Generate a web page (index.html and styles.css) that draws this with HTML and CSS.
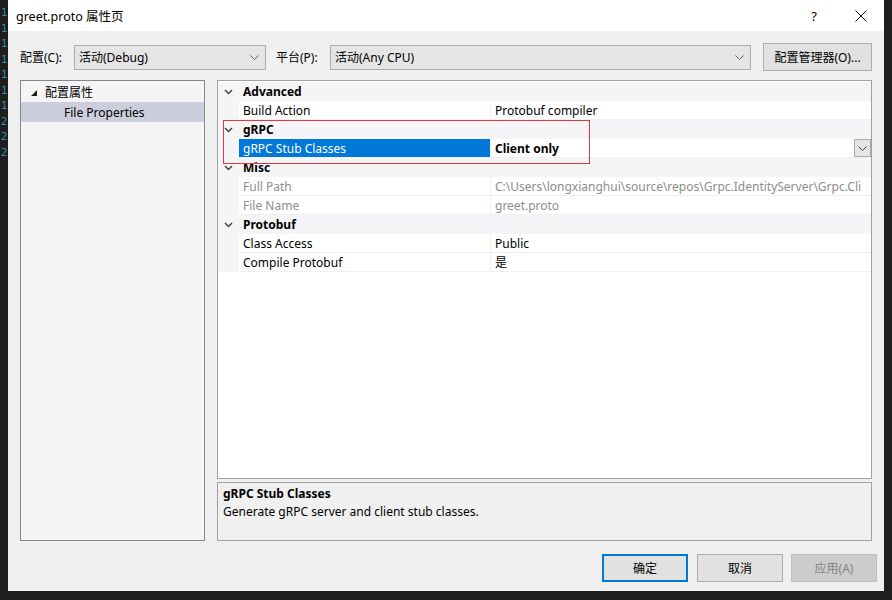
FILE: index.html
```html
<!DOCTYPE html>
<html>
<head>
<meta charset="utf-8">
<link rel="stylesheet" href="styles.css">
</head>
<body>
<div class="screen">
  <div class="gutter">
    <div>1</div><div>1</div><div>1</div><div>1</div><div>1</div><div>1</div><div>1</div><div>2</div><div>2</div><div>2</div>
  </div>
  <div class="dialog">
    <div class="titlebar">
      <span class="title">greet.proto 属性页</span>
      <span class="help">?</span>
      <svg class="close" width="12" height="12" viewBox="0 0 12 12"><path d="M0.5 0.5 L11.5 11.5 M11.5 0.5 L0.5 11.5" stroke="#111" stroke-width="1" fill="none"/></svg>
    </div>
    <div class="content">
      <div class="toolbar">
        <span class="label label-config">配置(C):</span>
        <div class="combo combo-config">
          <span class="combo-text">活动(Debug)</span>
          <svg class="combo-arrow" width="9" height="5" viewBox="0 0 9 5"><path d="M0.5 0.5 L4.5 4.5 L8.5 0.5" stroke="#606060" stroke-width="1" fill="none"/></svg>
        </div>
        <span class="label label-platform">平台(P):</span>
        <div class="combo combo-platform">
          <span class="combo-text">活动(Any CPU)</span>
          <svg class="combo-arrow" width="9" height="5" viewBox="0 0 9 5"><path d="M0.5 0.5 L4.5 4.5 L8.5 0.5" stroke="#606060" stroke-width="1" fill="none"/></svg>
        </div>
        <button class="btn btn-manager">配置管理器(O)...</button>
      </div>
      <div class="main">
        <div class="tree">
          <div class="tree-row">
            <svg class="tree-tri" width="6" height="6" viewBox="0 0 6 6"><polygon points="6,0 6,6 0,6" fill="#1e1e1e"/></svg>
            <span>配置属性</span>
          </div>
          <div class="tree-row tree-selected"><span class="tree-child">File Properties</span></div>
        </div>
        <div class="right">
          <div class="grid">
            <div class="row cat">
              <svg class="chev" width="9" height="6" viewBox="0 0 9 6"><path d="M1 1 L4.5 4.5 L8 1" stroke="#444" stroke-width="1.5" fill="none"/></svg>
              <span class="cat-name">Advanced</span>
            </div>
            <div class="row prop">
              <span class="pad"></span><span class="name">Build Action</span><span class="value">Protobuf compiler</span>
            </div>
            <div class="row cat">
              <svg class="chev" width="9" height="6" viewBox="0 0 9 6"><path d="M1 1 L4.5 4.5 L8 1" stroke="#444" stroke-width="1.5" fill="none"/></svg>
              <span class="cat-name">gRPC</span>
            </div>
            <div class="row prop selected">
              <span class="pad"></span><span class="name">gRPC Stub Classes</span>
              <span class="value bold"><span class="value-text">Client only</span>
                <span class="drop"><svg width="9" height="5" viewBox="0 0 9 5"><path d="M0.5 0.5 L4.5 4.5 L8.5 0.5" stroke="#404040" stroke-width="1" fill="none"/></svg></span>
              </span>
            </div>
            <div class="row cat">
              <svg class="chev" width="9" height="6" viewBox="0 0 9 6"><path d="M1 1 L4.5 4.5 L8 1" stroke="#444" stroke-width="1.5" fill="none"/></svg>
              <span class="cat-name">Misc</span>
            </div>
            <div class="row prop muted">
              <span class="pad"></span><span class="name">Full Path</span><span class="value">C:\Users\longxianghui\source\repos\Grpc.IdentityServer\Grpc.Cli</span>
            </div>
            <div class="row prop muted">
              <span class="pad"></span><span class="name">File Name</span><span class="value">greet.proto</span>
            </div>
            <div class="row cat">
              <svg class="chev" width="9" height="6" viewBox="0 0 9 6"><path d="M1 1 L4.5 4.5 L8 1" stroke="#444" stroke-width="1.5" fill="none"/></svg>
              <span class="cat-name">Protobuf</span>
            </div>
            <div class="row prop">
              <span class="pad"></span><span class="name">Class Access</span><span class="value">Public</span>
            </div>
            <div class="row prop">
              <span class="pad"></span><span class="name">Compile Protobuf</span><span class="value">是</span>
            </div>
            <div class="highlight"></div>
          </div>
          <div class="desc">
            <div class="desc-title">gRPC Stub Classes</div>
            <div class="desc-text">Generate gRPC server and client stub classes.</div>
          </div>
        </div>
      </div>
      <div class="buttons">
        <button class="btn btn-ok">确定</button>
        <button class="btn btn-cancel">取消</button>
        <button class="btn btn-apply">应用(A)</button>
      </div>
    </div>
  </div>
</div>
</body>
</html>
```
FILE: styles.css
```css
* { box-sizing: border-box; }
html, body {
  margin: 0;
  padding: 0;
  background: #1e1e1e;
  width: 892px;
  height: 600px;
  overflow: hidden;
}
body {
  font-family: "Noto Sans", "Noto Sans CJK SC", sans-serif;
  font-size: 12px;
  color: #000;
}
.screen {
  display: flex;
  width: 892px;
  height: 600px;
}
.gutter {
  width: 8px;
  padding-top: 5px;
  padding-left: 1px;
  font-family: "DejaVu Sans Mono", monospace;
  font-size: 10.5px;
  line-height: 15.5px;
  color: #2b91af;
  flex: none;
}
.dialog {
  width: 876px;
  height: 591px;
  background: #f0f0f0;
  display: flex;
  flex-direction: column;
  flex: none;
  min-width: 0;
}
.titlebar {
  height: 31px;
  background: #fff;
  display: flex;
  align-items: center;
  padding-left: 8px;
  flex: none;
}
.title {
  font-size: 12.5px;
  flex: 1;
  padding-bottom: 1px;
}
.help {
  font-size: 13px;
  margin-right: 38px;
}
.close {
  margin-right: 17px;
}
.content {
  flex: 1;
  display: flex;
  flex-direction: column;
  padding: 12px 12px 9px 12px;
  min-width: 0;
}
.toolbar {
  height: 28px;
  display: flex;
  align-items: center;
  flex: none;
}
.label {
  flex: none;
}
.label-config { width: 54px; }
.label-platform { width: 54px; margin-left: 10px; }
.combo {
  height: 25px;
  background: #e5e5e5;
  border: 1px solid #adadad;
  display: flex;
  align-items: center;
  padding-left: 4px;
  padding-right: 6px;
  flex: none;
}
.combo-text { flex: 1; }
.combo-config { width: 192px; }
.combo-platform { width: 421px; }
.btn {
  font-family: inherit;
  font-size: 12px;
  background: #e1e1e1;
  border: 1px solid #adadad;
  color: #000;
  padding: 0;
  margin: 0;
  height: 28px;
}
.btn-manager {
  width: 110px;
  margin-left: 12px;
}
.main {
  margin-top: 9px;
  height: 461px;
  display: flex;
  flex: none;
  min-width: 0;
}
.tree {
  width: 185px;
  background: #f5f5f5;
  border: 1px solid #828790;
  padding-top: 1px;
  flex: none;
}
.tree-row {
  height: 20px;
  display: flex;
  align-items: center;
}
.tree-tri {
  margin-left: 10px;
  margin-right: 8px;
  margin-top: 1px;
}
.tree-selected {
  background: #cccedb;
}
.tree-child { padding-left: 43px; }
.right {
  flex: 1;
  min-width: 0;
  margin-left: 12px;
  display: flex;
  flex-direction: column;
}
.grid {
  flex: 1;
  background: #fff;
  border: 1px solid #a0a0a0;
  padding-top: 1px;
  position: relative;
  overflow: hidden;
}
.row {
  height: 19px;
  display: flex;
  align-items: stretch;
  white-space: nowrap;
}
.cat {
  background: #f5f5f7;
  align-items: center;
}
.chev { margin-left: 6px; margin-right: 10px; }
.cat-name { font-weight: bold; }
.pad {
  width: 21px;
  background: #f5f5f7;
  flex: none;
}
.name, .value {
  border-bottom: 1px solid #f0f0f0;
  display: flex;
  align-items: center;
  overflow: hidden;
}
.name {
  width: 252px;
  padding-left: 4px;
  border-right: 1px solid #f0f0f0;
  flex: none;
}
.value {
  flex: 1;
  min-width: 0;
  padding-left: 4px;
}
.muted .name, .muted .value { color: #8d8d8d; }
.selected .name {
  background: #0078d7;
  color: #fff;
}
.bold { font-weight: bold; }
.value-text { flex: 1; }
.drop {
  width: 17px;
  height: 18px;
  background: #e5e5e5;
  border: 1px solid #adadad;
  display: flex;
  align-items: center;
  justify-content: center;
  flex: none;
}
.highlight {
  position: absolute;
  left: 5px;
  top: 39px;
  width: 367px;
  height: 44px;
  border: 1px solid #e0383e;
}
.desc {
  height: 59px;
  margin-top: 3px;
  background: #f0f0f0;
  border: 1px solid #a0a0a0;
  padding: 2px 5px;
  flex: none;
}
.desc-title {
  font-weight: bold;
  height: 18px;
  line-height: 18px;
}
.desc-text {
  height: 18px;
  line-height: 18px;
}
.buttons {
  margin-top: 13px;
  display: flex;
  justify-content: flex-end;
  margin-right: -5px;
  flex: none;
}
.btn-ok, .btn-cancel, .btn-apply { width: 86px; }
.btn-ok { border: 2px solid #0078d7; }
.btn-cancel { margin-left: 9px; }
.btn-apply {
  margin-left: 8px;
  background: #cccccc;
  border-color: #bfbfbf;
  color: #838383;
}
```
